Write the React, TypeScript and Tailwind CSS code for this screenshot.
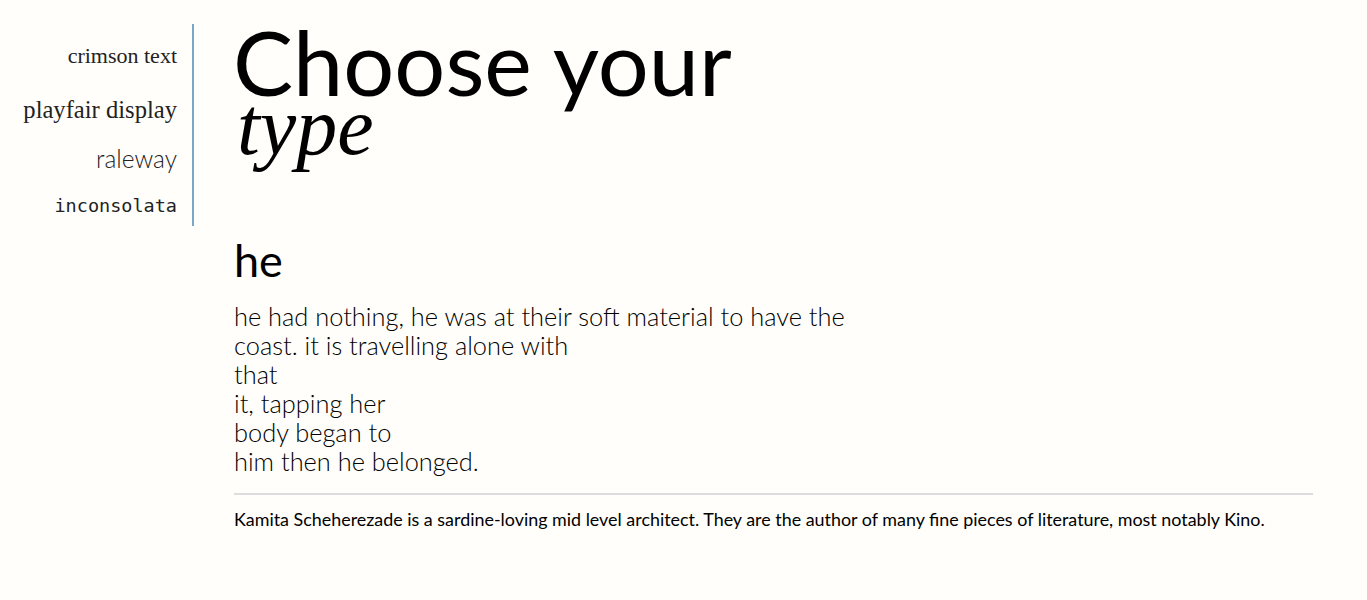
import React from 'react';

const lines = [
  'he had nothing, he was at their soft material to have the',
  'coast. it is travelling alone with',
  'that',
  'it, tapping her',
  'body began to',
  'him then he belonged.',
];

export default function App() {
  return (
    <div className="min-h-screen bg-[#fffefa] text-black flex items-start pt-6">
      <aside className="w-[194px] shrink-0 border-r-2 border-[#7ba7c8] pr-[15px] pt-[21px] pb-[10px] text-right flex flex-col text-[#222]">
        <a className="block leading-none text-[22px] font-['Liberation_Serif',serif]">crimson text</a>
        <a className="block leading-none mt-[31px] text-[24.6px] font-['Liberation_Serif',serif]">playfair display</a>
        <a className="block leading-none mt-[24px] text-[24.5px] font-light font-['Lato',sans-serif]">raleway</a>
        <a className="block leading-none mt-[26px] text-[18.5px] font-['DejaVu_Sans_Mono',monospace]">inconsolata</a>
      </aside>

      <main className="ml-10 w-[1079px]">
        <h1 className="leading-[0.826] text-[90px] font-['Lato',sans-serif] -ml-px">Choose your</h1>
        <div className="leading-[0.7] text-[82px] italic font-['Liberation_Serif',serif] ml-[3px]">type</div>

        <h2 className="mt-[82px] leading-none text-[45px] font-['Lato',sans-serif]">he</h2>
        <p className="mt-[19px] leading-[29px] text-[25.4px] font-light font-['Lato',sans-serif] text-black">
          {lines.map((l, i) => (
            <span key={i} className="block">{l}</span>
          ))}
        </p>

        <hr className="mt-[17px] border-0 border-t-2 border-[#dddddd]" />
        <p className="mt-[16px] leading-none text-[17.9px] font-['Lato',sans-serif]">
          Kamita Scheherezade is a sardine-loving mid level architect. They are the author of many fine pieces of literature, most notably Kino.
        </p>
      </main>
    </div>
  );
}
